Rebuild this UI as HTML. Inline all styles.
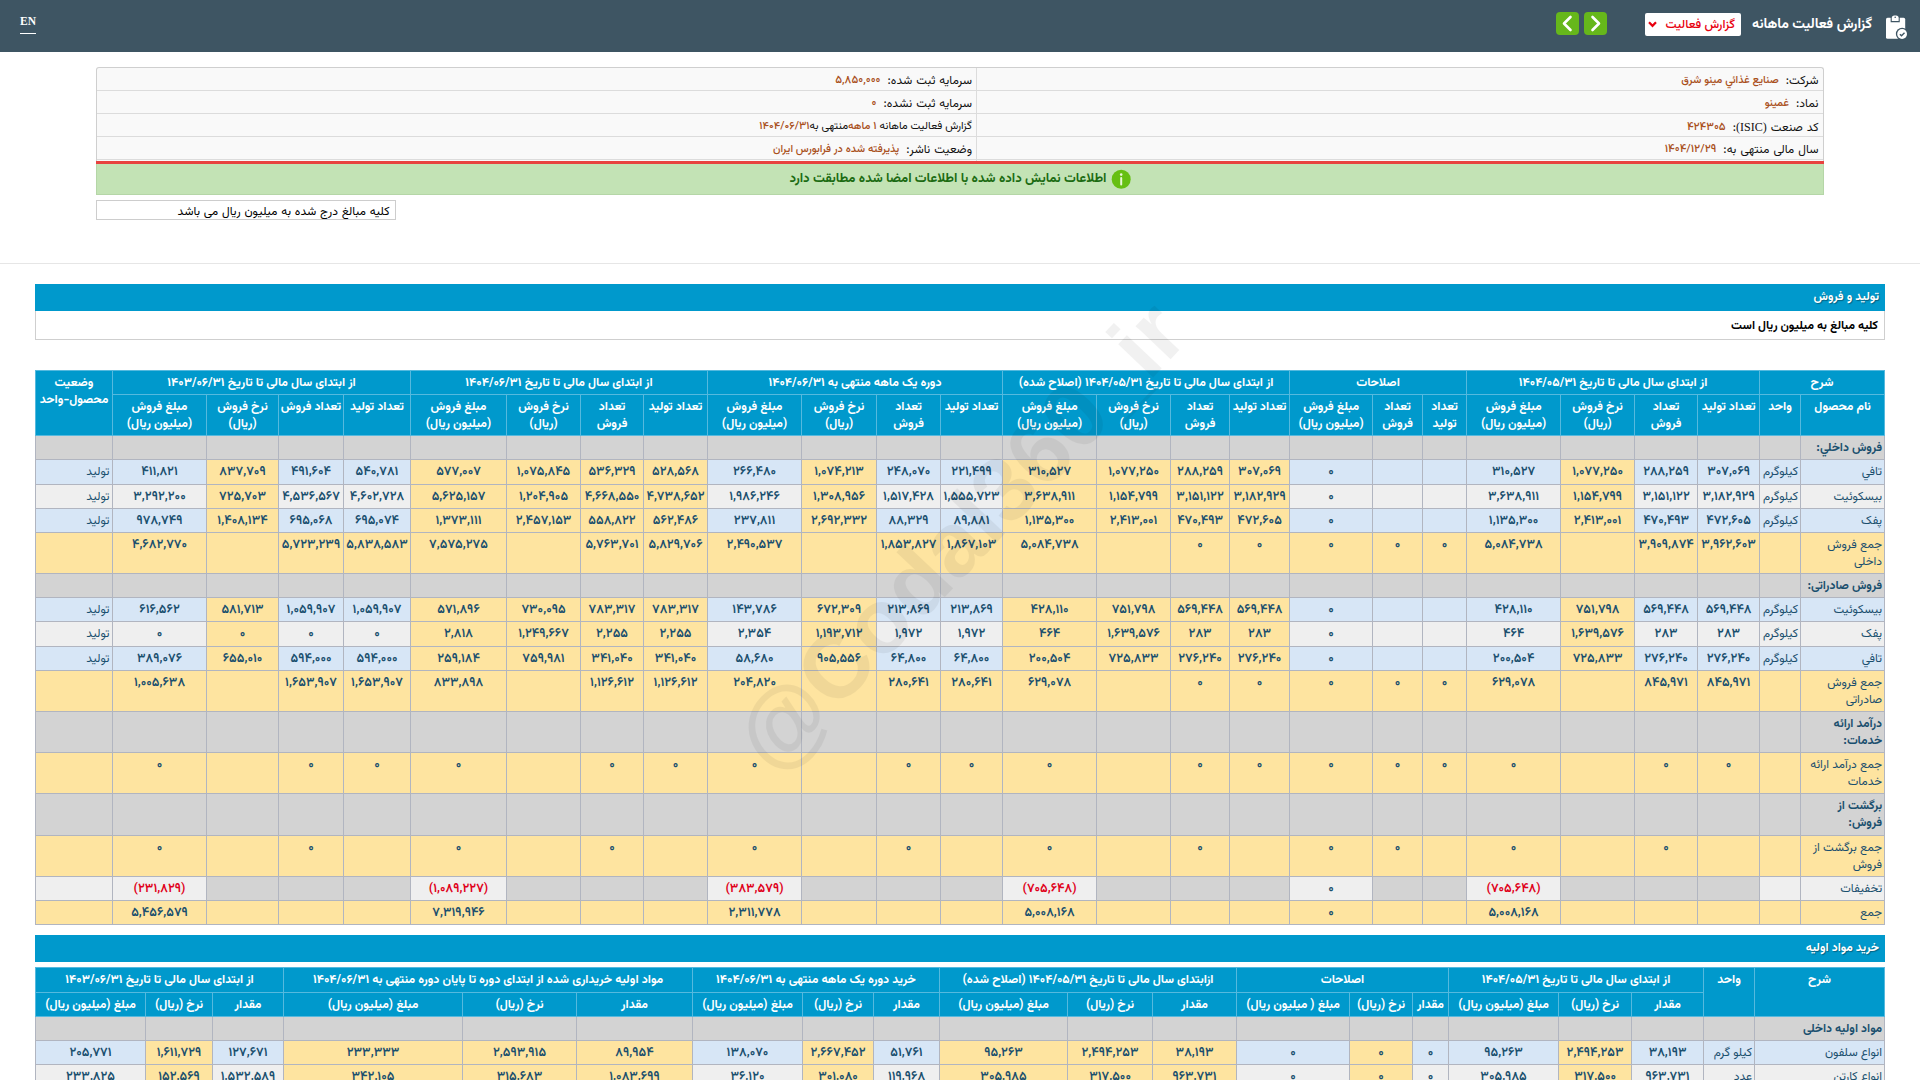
<!DOCTYPE html><html lang="fa" dir="rtl"><head><meta charset="utf-8"><title>گزارش فعالیت ماهانه</title><style>
*{box-sizing:border-box}
html,body{margin:0;padding:0}
body{width:1920px;height:1080px;overflow:hidden;background:#fff;direction:rtl;font-family:"Vazirmatn","DejaVu Sans","Liberation Sans",sans-serif;font-size:12px;color:#000;position:relative}
.lat{font-family:"Liberation Serif",serif}
#top{position:absolute;left:0;top:0;width:1920px;height:52px;background:#3e5563}
#en{position:absolute;left:20px;top:14px;color:#fff;font-family:"Liberation Serif",serif;font-weight:bold;font-size:11.5px;direction:ltr;line-height:14px;border-bottom:1px solid #fff;padding-bottom:5px}
#title{position:absolute;right:48px;top:13.5px;color:#fff;font-weight:bold;font-size:14px;line-height:22px;white-space:nowrap}
#sel{position:absolute;left:1645px;top:13px;width:96px;height:23px;background:#fff;border-radius:2px;color:#e8000f;font-weight:500;font-size:12.3px;line-height:24px;padding-right:6px;white-space:nowrap;word-spacing:0px}
.nb{position:absolute;top:12px;width:23px;height:23px;background:#66b71b;border-radius:4px}
#info{position:absolute;left:96px;top:67px;width:1728px;height:94px;border:1px solid #cfcfcf;border-bottom:none;background:#f9f9f9;border-radius:3px 3px 0 0}
.ir{position:absolute;left:0;width:100%;height:23px;border-bottom:1px solid #dcdcdc}
.ic{position:absolute;top:2px;height:23px;line-height:23px;white-space:nowrap;font-size:12px;color:#111;word-spacing:.8px}
.ic b{font-weight:500;color:#a9501c;font-size:10.8px;word-spacing:0;position:relative;top:-1px;margin-right:-1px}
.ic .m{font-size:11px;font-weight:500;color:#a9501c}
.ic .n{font-size:11.4px;font-weight:500;color:#a9501c;position:relative;top:-1px;margin-right:-1px}
#redl{position:absolute;left:96px;top:161px;width:1728px;height:3px;background:#e8423f}
#green{position:absolute;left:96px;top:164px;width:1728px;height:31px;background:#c3e3b5;border:1px solid #b5d6a7;border-top:none}
#green span{position:absolute;white-space:nowrap;font-size:13.15px;color:#1b6b12;font-weight:bold}
#note{position:absolute;left:96px;top:200px;width:300px;height:20px;border:1px solid #cdcdcd;background:#fff;font-size:12px;line-height:22px;padding-right:5.5px;white-space:nowrap;word-spacing:.55px}
#hr{position:absolute;left:0;top:263px;width:1920px;height:1px;background:#e6e6e6}
.sh{position:absolute;left:35px;width:1850px;height:27px;background:#0099cc;color:#fff;font-weight:bold;font-size:12px;line-height:27px;padding-right:6px;text-shadow:1px 1px 1px rgba(0,0,0,.35)}
#sub{position:absolute;left:35px;top:311px;width:1850px;height:29px;border:1px solid #cfcfcf;border-top:none;background:#fff;font-weight:bold;font-size:12px;line-height:30px;padding-right:6px}
table{position:absolute;border-collapse:collapse;table-layout:fixed;direction:rtl}
td,th{border:1px solid #b1b5c0;padding:0;overflow:hidden;vertical-align:top;text-align:center;white-space:nowrap}
th{background:#0099cc;color:#fff;font-weight:bold;font-size:12.2px;line-height:17px;border-color:#55b9de;white-space:nowrap}
tr.h2 th{padding-top:4px}
td{font-weight:600;font-size:12.7px;color:#1a4f6e;line-height:17px;padding-top:4px}
td.t{font-weight:normal;font-size:12px;text-align:right;padding-right:2px;white-space:nowrap;padding-top:4px}
td.c{font-weight:bold;font-size:12px;text-align:right;padding-right:2px;white-space:nowrap;padding-top:4px}
.y{background:#fee4a0}.b{background:#d7e6f6}.g{background:#d3d3d3}.l{background:#efefef}
.r{color:#e0001a}
#wm{position:absolute;left:960px;top:536px;width:0;height:0;white-space:nowrap;direction:ltr;font-family:"Liberation Sans",sans-serif;font-weight:bold;font-size:91px;line-height:0;color:#000;opacity:.05;transform:rotate(-46.5deg);display:flex;justify-content:center;align-items:center;pointer-events:none}
tr.k th{padding-top:4px}
</style></head><body>
<div id="top"><div id="en">EN</div><svg style="position:absolute;left:1884px;top:12px" width="28" height="30" viewBox="0 0 28 30"><rect x="2" y="5.8" width="19.2" height="21" rx="1.6" fill="#fff"/><path d="M7.2 9.6V6.2a3.2 3.2 0 0 1 3.2-3.2h1.6a3.2 3.2 0 0 1 3.2 3.2v3.4z" fill="#fff" stroke="#3e5563" stroke-width="1.1"/><rect x="6.6" y="2" width="9.2" height="3.9" fill="#3e5563"/><path d="M7.75 6.2a2.65 2.65 0 0 1 2.65-2.65h1.6a2.65 2.65 0 0 1 2.65 2.65z" fill="#fff"/><circle cx="11.2" cy="5.3" r=".8" fill="#3e5563"/><circle cx="18.1" cy="22" r="6.2" fill="#3e5563"/><circle cx="18.1" cy="22" r="4.9" fill="#fff"/><path d="M15.9 22.3l1.6 1.5 3-3" stroke="#3e5563" stroke-width="1.4" fill="none"/></svg><div id="title">گزارش فعالیت ماهانه</div><div id="sel">گزارش فعالیت<svg style="position:absolute;left:3px;top:8px" width="9" height="7" viewBox="0 0 9 7"><path d="M1 1.2l3.5 3.6L8 1.2" stroke="#e8000f" stroke-width="2.2" fill="none"/></svg></div><div class="nb" style="left:1584px"><svg width="23" height="23" viewBox="0 0 23 23"><path d="M8.5 5l6.5 6.5-6.5 6.5" stroke="#fff" stroke-width="2.6" fill="none" stroke-linecap="round" stroke-linejoin="round"/></svg></div><div class="nb" style="left:1556px"><svg width="23" height="23" viewBox="0 0 23 23"><path d="M14.5 5L8 11.5l6.5 6.5" stroke="#fff" stroke-width="2.6" fill="none" stroke-linecap="round" stroke-linejoin="round"/></svg></div></div>
<div id="info">
<div class="ir" style="top:0px">
<div class="ic" style="right:4.5px">شرکت:&nbsp; <b>صنایع غذائي مینو شرق</b></div>
<div class="ic" style="right:851px">سرمایه ثبت شده:&nbsp; <span class="n">۵,۸۵۰,۰۰۰</span></div>
</div>
<div class="ir" style="top:23px">
<div class="ic" style="right:4.5px">نماد:&nbsp; <b>غمینو</b></div>
<div class="ic" style="right:851px">سرمایه ثبت نشده:&nbsp; <span class="n">۰</span></div>
</div>
<div class="ir" style="top:46px">
<div class="ic" style="right:4.5px">کد صنعت <span class="lat">(ISIC)</span>:&nbsp; <span class="n">۴۲۴۳۰۵</span></div>
<div class="ic" style="right:851px;font-size:11px;word-spacing:0;margin-top:-1px">گزارش فعالیت ماهانه <span class="m">۱ ماهه</span>&zwnj;منتهی به<span class="m">۱۴۰۴/۰۶/۳۱</span></div>
</div>
<div class="ir" style="top:69px">
<div class="ic" style="right:4.5px">سال مالی منتهی به:&nbsp; <span class="n">۱۴۰۴/۱۲/۲۹</span></div>
<div class="ic" style="right:851px">وضعیت ناشر:&nbsp; <b>پذیرفته شده در فرابورس ایران</b></div>
</div>
<div style="position:absolute;left:879px;top:0;width:1px;height:93px;background:#dcdcdc"></div>
</div><div id="redl"></div>
<div id="green"><svg style="position:absolute;left:1014px;top:5px" width="21" height="21" viewBox="0 0 21 21"><circle cx="10.2" cy="10.3" r="9.5" fill="#66bf12"/><circle cx="10.2" cy="5.6" r="1.3" fill="#e9f8d8"/><rect x="9.2" y="8" width="2" height="8.4" rx="1" fill="#e9f8d8"/></svg><span style="right:716.5px;top:8px;line-height:15px">اطلاعات نمایش داده شده با اطلاعات امضا شده مطابقت دارد</span></div>
<div id="note">کلیه مبالغ درج شده به میلیون ریال می باشد</div><div id="hr"></div>
<div class="sh" style="top:284px">تولید و فروش</div><div id="sub">کلیه مبالغ به میلیون ریال است</div>
<table id="t1" style="left:35px;top:370px;width:1850px"><colgroup><col style="width:84px"><col style="width:41px"><col style="width:62px"><col style="width:63px"><col style="width:74px"><col style="width:94px"><col style="width:44px"><col style="width:50px"><col style="width:83px"><col style="width:60px"><col style="width:59px"><col style="width:74px"><col style="width:94px"><col style="width:62px"><col style="width:64px"><col style="width:75px"><col style="width:94px"><col style="width:64px"><col style="width:63px"><col style="width:74px"><col style="width:96px"><col style="width:67px"><col style="width:65px"><col style="width:72px"><col style="width:94px"><col style="width:77px"></colgroup><tr style="height:23.5px"><th colspan="2" style="padding-top:4px">شرح</th><th colspan="4" style="padding-top:4px">از ابتدای سال مالی تا تاریخ ۱۴۰۴/۰۵/۳۱</th><th colspan="3" style="padding-top:4px">اصلاحات</th><th colspan="4" style="padding-top:4px">از ابتدای سال مالی تا تاریخ ۱۴۰۴/۰۵/۳۱ (اصلاح شده)</th><th colspan="4" style="padding-top:4px">دوره یک ماهه منتهی به ۱۴۰۴/۰۶/۳۱</th><th colspan="4" style="padding-top:4px">از ابتدای سال مالی تا تاریخ ۱۴۰۴/۰۶/۳۱</th><th colspan="4" style="padding-top:4px">از ابتدای سال مالی تا تاریخ ۱۴۰۳/۰۶/۳۱</th><th rowspan="2" style="padding-top:4px">وضعیت<br>محصول-واحد</th></tr><tr style="height:41px" class="h2"><th>نام محصول</th><th>واحد</th><th>تعداد تولید</th><th>تعداد<br>فروش</th><th>نرخ فروش<br>(ریال)</th><th>مبلغ فروش<br>(میلیون ریال)</th><th>تعداد<br>تولید</th><th>تعداد<br>فروش</th><th>مبلغ فروش<br>(میلیون ریال)</th><th>تعداد تولید</th><th>تعداد<br>فروش</th><th>نرخ فروش<br>(ریال)</th><th>مبلغ فروش<br>(میلیون ریال)</th><th>تعداد تولید</th><th>تعداد<br>فروش</th><th>نرخ فروش<br>(ریال)</th><th>مبلغ فروش<br>(میلیون ریال)</th><th>تعداد تولید</th><th>تعداد<br>فروش</th><th>نرخ فروش<br>(ریال)</th><th>مبلغ فروش<br>(میلیون ریال)</th><th>تعداد تولید</th><th>تعداد فروش</th><th>نرخ فروش<br>(ریال)</th><th>مبلغ فروش<br>(میلیون ریال)</th></tr><tr style="height:24px"><td class="c g">فروش داخلي:</td><td class="g"></td><td class="g"></td><td class="g"></td><td class="g"></td><td class="g"></td><td class="g"></td><td class="g"></td><td class="g"></td><td class="g"></td><td class="g"></td><td class="g"></td><td class="g"></td><td class="g"></td><td class="g"></td><td class="g"></td><td class="g"></td><td class="g"></td><td class="g"></td><td class="g"></td><td class="g"></td><td class="g"></td><td class="g"></td><td class="g"></td><td class="g"></td><td class="g"></td></tr><tr style="height:25.5px"><td class="t b">تافي</td><td class="t b" style="padding-right:2px">کیلوگرم</td><td class="b">۳۰۷,۰۶۹</td><td class="b">۲۸۸,۲۵۹</td><td class="y">۱,۰۷۷,۲۵۰</td><td class="b">۳۱۰,۵۲۷</td><td class="b"></td><td class="b"></td><td class="b">۰</td><td class="y">۳۰۷,۰۶۹</td><td class="y">۲۸۸,۲۵۹</td><td class="y">۱,۰۷۷,۲۵۰</td><td class="y">۳۱۰,۵۲۷</td><td class="b">۲۲۱,۴۹۹</td><td class="b">۲۴۸,۰۷۰</td><td class="y">۱,۰۷۴,۲۱۳</td><td class="b">۲۶۶,۴۸۰</td><td class="y">۵۲۸,۵۶۸</td><td class="y">۵۳۶,۳۲۹</td><td class="y">۱,۰۷۵,۸۴۵</td><td class="y">۵۷۷,۰۰۷</td><td class="b">۵۴۰,۷۸۱</td><td class="b">۴۹۱,۶۰۴</td><td class="y">۸۳۷,۷۰۹</td><td class="b">۴۱۱,۸۲۱</td><td class="t b" style="padding-right:2.5px">تولید</td></tr><tr style="height:24px"><td class="t l">بیسکوئیت</td><td class="t l" style="padding-right:2px">کیلوگرم</td><td class="l">۳,۱۸۲,۹۲۹</td><td class="l">۳,۱۵۱,۱۲۲</td><td class="y">۱,۱۵۴,۷۹۹</td><td class="l">۳,۶۳۸,۹۱۱</td><td class="l"></td><td class="l"></td><td class="l">۰</td><td class="y">۳,۱۸۲,۹۲۹</td><td class="y">۳,۱۵۱,۱۲۲</td><td class="y">۱,۱۵۴,۷۹۹</td><td class="y">۳,۶۳۸,۹۱۱</td><td class="l">۱,۵۵۵,۷۲۳</td><td class="l">۱,۵۱۷,۴۲۸</td><td class="y">۱,۳۰۸,۹۵۶</td><td class="l">۱,۹۸۶,۲۴۶</td><td class="y">۴,۷۳۸,۶۵۲</td><td class="y">۴,۶۶۸,۵۵۰</td><td class="y">۱,۲۰۴,۹۰۵</td><td class="y">۵,۶۲۵,۱۵۷</td><td class="l">۴,۶۰۲,۷۲۸</td><td class="l">۴,۵۳۶,۵۶۷</td><td class="y">۷۲۵,۷۰۳</td><td class="l">۳,۲۹۲,۲۰۰</td><td class="t l" style="padding-right:2.5px">تولید</td></tr><tr style="height:24px"><td class="t b">پفک</td><td class="t b" style="padding-right:2px">کیلوگرم</td><td class="b">۴۷۲,۶۰۵</td><td class="b">۴۷۰,۴۹۳</td><td class="y">۲,۴۱۳,۰۰۱</td><td class="b">۱,۱۳۵,۳۰۰</td><td class="b"></td><td class="b"></td><td class="b">۰</td><td class="y">۴۷۲,۶۰۵</td><td class="y">۴۷۰,۴۹۳</td><td class="y">۲,۴۱۳,۰۰۱</td><td class="y">۱,۱۳۵,۳۰۰</td><td class="b">۸۹,۸۸۱</td><td class="b">۸۸,۳۲۹</td><td class="y">۲,۶۹۲,۳۳۲</td><td class="b">۲۳۷,۸۱۱</td><td class="y">۵۶۲,۴۸۶</td><td class="y">۵۵۸,۸۲۲</td><td class="y">۲,۴۵۷,۱۵۳</td><td class="y">۱,۳۷۳,۱۱۱</td><td class="b">۶۹۵,۰۷۴</td><td class="b">۶۹۵,۰۶۸</td><td class="y">۱,۴۰۸,۱۳۴</td><td class="b">۹۷۸,۷۴۹</td><td class="t b" style="padding-right:2.5px">تولید</td></tr><tr style="height:40.5px"><td class="t y">جمع فروش<br>داخلی</td><td class="y"></td><td class="y">۳,۹۶۲,۶۰۳</td><td class="y">۳,۹۰۹,۸۷۴</td><td class="y"></td><td class="y">۵,۰۸۴,۷۳۸</td><td class="y">۰</td><td class="y">۰</td><td class="y">۰</td><td class="y">۰</td><td class="y">۰</td><td class="y"></td><td class="y">۵,۰۸۴,۷۳۸</td><td class="y">۱,۸۶۷,۱۰۳</td><td class="y">۱,۸۵۳,۸۲۷</td><td class="y"></td><td class="y">۲,۴۹۰,۵۳۷</td><td class="y">۵,۸۲۹,۷۰۶</td><td class="y">۵,۷۶۳,۷۰۱</td><td class="y"></td><td class="y">۷,۵۷۵,۲۷۵</td><td class="y">۵,۸۳۸,۵۸۳</td><td class="y">۵,۷۲۳,۲۳۹</td><td class="y"></td><td class="y">۴,۶۸۲,۷۷۰</td><td class="y"></td></tr><tr style="height:24.5px"><td class="c g">فروش صادراتی:</td><td class="g"></td><td class="g"></td><td class="g"></td><td class="g"></td><td class="g"></td><td class="g"></td><td class="g"></td><td class="g"></td><td class="g"></td><td class="g"></td><td class="g"></td><td class="g"></td><td class="g"></td><td class="g"></td><td class="g"></td><td class="g"></td><td class="g"></td><td class="g"></td><td class="g"></td><td class="g"></td><td class="g"></td><td class="g"></td><td class="g"></td><td class="g"></td><td class="g"></td></tr><tr style="height:23.5px"><td class="t b">بیسکوئیت</td><td class="t b" style="padding-right:2px">کیلوگرم</td><td class="b">۵۶۹,۴۴۸</td><td class="b">۵۶۹,۴۴۸</td><td class="y">۷۵۱,۷۹۸</td><td class="b">۴۲۸,۱۱۰</td><td class="b"></td><td class="b"></td><td class="b">۰</td><td class="y">۵۶۹,۴۴۸</td><td class="y">۵۶۹,۴۴۸</td><td class="y">۷۵۱,۷۹۸</td><td class="y">۴۲۸,۱۱۰</td><td class="b">۲۱۳,۸۶۹</td><td class="b">۲۱۳,۸۶۹</td><td class="y">۶۷۲,۳۰۹</td><td class="b">۱۴۳,۷۸۶</td><td class="y">۷۸۳,۳۱۷</td><td class="y">۷۸۳,۳۱۷</td><td class="y">۷۳۰,۰۹۵</td><td class="y">۵۷۱,۸۹۶</td><td class="b">۱,۰۵۹,۹۰۷</td><td class="b">۱,۰۵۹,۹۰۷</td><td class="y">۵۸۱,۷۱۳</td><td class="b">۶۱۶,۵۶۲</td><td class="t b" style="padding-right:2.5px">تولید</td></tr><tr style="height:25.5px"><td class="t l">پفک</td><td class="t l" style="padding-right:2px">کیلوگرم</td><td class="l">۲۸۳</td><td class="l">۲۸۳</td><td class="y">۱,۶۳۹,۵۷۶</td><td class="l">۴۶۴</td><td class="l"></td><td class="l"></td><td class="l">۰</td><td class="y">۲۸۳</td><td class="y">۲۸۳</td><td class="y">۱,۶۳۹,۵۷۶</td><td class="y">۴۶۴</td><td class="l">۱,۹۷۲</td><td class="l">۱,۹۷۲</td><td class="y">۱,۱۹۳,۷۱۲</td><td class="l">۲,۳۵۴</td><td class="y">۲,۲۵۵</td><td class="y">۲,۲۵۵</td><td class="y">۱,۲۴۹,۶۶۷</td><td class="y">۲,۸۱۸</td><td class="l">۰</td><td class="l">۰</td><td class="y">۰</td><td class="l">۰</td><td class="t l" style="padding-right:2.5px">تولید</td></tr><tr style="height:24px"><td class="t b">تافي</td><td class="t b" style="padding-right:2px">کیلوگرم</td><td class="b">۲۷۶,۲۴۰</td><td class="b">۲۷۶,۲۴۰</td><td class="y">۷۲۵,۸۳۳</td><td class="b">۲۰۰,۵۰۴</td><td class="b"></td><td class="b"></td><td class="b">۰</td><td class="y">۲۷۶,۲۴۰</td><td class="y">۲۷۶,۲۴۰</td><td class="y">۷۲۵,۸۳۳</td><td class="y">۲۰۰,۵۰۴</td><td class="b">۶۴,۸۰۰</td><td class="b">۶۴,۸۰۰</td><td class="y">۹۰۵,۵۵۶</td><td class="b">۵۸,۶۸۰</td><td class="y">۳۴۱,۰۴۰</td><td class="y">۳۴۱,۰۴۰</td><td class="y">۷۵۹,۹۸۱</td><td class="y">۲۵۹,۱۸۴</td><td class="b">۵۹۴,۰۰۰</td><td class="b">۵۹۴,۰۰۰</td><td class="y">۶۵۵,۰۱۰</td><td class="b">۳۸۹,۰۷۶</td><td class="t b" style="padding-right:2.5px">تولید</td></tr><tr style="height:40.5px"><td class="t y">جمع فروش<br>صادراتی</td><td class="y"></td><td class="y">۸۴۵,۹۷۱</td><td class="y">۸۴۵,۹۷۱</td><td class="y"></td><td class="y">۶۲۹,۰۷۸</td><td class="y">۰</td><td class="y">۰</td><td class="y">۰</td><td class="y">۰</td><td class="y">۰</td><td class="y"></td><td class="y">۶۲۹,۰۷۸</td><td class="y">۲۸۰,۶۴۱</td><td class="y">۲۸۰,۶۴۱</td><td class="y"></td><td class="y">۲۰۴,۸۲۰</td><td class="y">۱,۱۲۶,۶۱۲</td><td class="y">۱,۱۲۶,۶۱۲</td><td class="y"></td><td class="y">۸۳۳,۸۹۸</td><td class="y">۱,۶۵۳,۹۰۷</td><td class="y">۱,۶۵۳,۹۰۷</td><td class="y"></td><td class="y">۱,۰۰۵,۶۳۸</td><td class="y"></td></tr><tr style="height:41.5px"><td class="c g">درآمد ارائه<br>خدمات:</td><td class="g"></td><td class="g"></td><td class="g"></td><td class="g"></td><td class="g"></td><td class="g"></td><td class="g"></td><td class="g"></td><td class="g"></td><td class="g"></td><td class="g"></td><td class="g"></td><td class="g"></td><td class="g"></td><td class="g"></td><td class="g"></td><td class="g"></td><td class="g"></td><td class="g"></td><td class="g"></td><td class="g"></td><td class="g"></td><td class="g"></td><td class="g"></td><td class="g"></td></tr><tr style="height:40.5px"><td class="t y">جمع درآمد ارائه<br>خدمات</td><td class="y"></td><td class="y">۰</td><td class="y">۰</td><td class="y"></td><td class="y">۰</td><td class="y">۰</td><td class="y">۰</td><td class="y">۰</td><td class="y">۰</td><td class="y">۰</td><td class="y"></td><td class="y">۰</td><td class="y">۰</td><td class="y">۰</td><td class="y"></td><td class="y">۰</td><td class="y">۰</td><td class="y">۰</td><td class="y"></td><td class="y">۰</td><td class="y">۰</td><td class="y">۰</td><td class="y"></td><td class="y">۰</td><td class="y"></td></tr><tr style="height:42.5px"><td class="c g">برگشت از<br>فروش:</td><td class="g"></td><td class="g"></td><td class="g"></td><td class="g"></td><td class="g"></td><td class="g"></td><td class="g"></td><td class="g"></td><td class="g"></td><td class="g"></td><td class="g"></td><td class="g"></td><td class="g"></td><td class="g"></td><td class="g"></td><td class="g"></td><td class="g"></td><td class="g"></td><td class="g"></td><td class="g"></td><td class="g"></td><td class="g"></td><td class="g"></td><td class="g"></td><td class="g"></td></tr><tr style="height:40.5px"><td class="t y">جمع برگشت از<br>فروش</td><td class="y"></td><td class="y"></td><td class="y">۰</td><td class="y"></td><td class="y">۰</td><td class="y"></td><td class="y">۰</td><td class="y">۰</td><td class="y"></td><td class="y">۰</td><td class="y"></td><td class="y">۰</td><td class="y"></td><td class="y">۰</td><td class="y"></td><td class="y">۰</td><td class="y"></td><td class="y">۰</td><td class="y"></td><td class="y">۰</td><td class="y"></td><td class="y">۰</td><td class="y"></td><td class="y">۰</td><td class="y"></td></tr><tr style="height:24.5px"><td class="t l">تخفیفات</td><td class="l"></td><td class="g"></td><td class="g"></td><td class="g"></td><td class="l r">(۷۰۵,۶۴۸)</td><td class="g"></td><td class="g"></td><td class="l">۰</td><td class="g"></td><td class="g"></td><td class="g"></td><td class="l r">(۷۰۵,۶۴۸)</td><td class="g"></td><td class="g"></td><td class="g"></td><td class="l r">(۳۸۳,۵۷۹)</td><td class="g"></td><td class="g"></td><td class="g"></td><td class="l r">(۱,۰۸۹,۲۲۷)</td><td class="g"></td><td class="g"></td><td class="g"></td><td class="l r">(۲۳۱,۸۲۹)</td><td class="l"></td></tr><tr style="height:24px"><td class="t y">جمع</td><td class="y"></td><td class="y"></td><td class="y"></td><td class="y"></td><td class="y">۵,۰۰۸,۱۶۸</td><td class="y"></td><td class="y"></td><td class="y">۰</td><td class="y"></td><td class="y"></td><td class="y"></td><td class="y">۵,۰۰۸,۱۶۸</td><td class="y"></td><td class="y"></td><td class="y"></td><td class="y">۲,۳۱۱,۷۷۸</td><td class="y"></td><td class="y"></td><td class="y"></td><td class="y">۷,۳۱۹,۹۴۶</td><td class="y"></td><td class="y"></td><td class="y"></td><td class="y">۵,۴۵۶,۵۷۹</td><td class="y"></td></tr></table>
<div class="sh" style="top:935px">خرید مواد اولیه</div>
<table id="t2" style="left:35px;top:967px;width:1850px"><colgroup><col style="width:130px"><col style="width:51px"><col style="width:72px"><col style="width:73px"><col style="width:110px"><col style="width:36px"><col style="width:63px"><col style="width:113px"><col style="width:84px"><col style="width:85px"><col style="width:128px"><col style="width:66px"><col style="width:71px"><col style="width:110px"><col style="width:116px"><col style="width:114px"><col style="width:179px"><col style="width:71px"><col style="width:67px"><col style="width:110px"></colgroup><tr style="height:24.5px" class="k"><th rowspan="2">شرح</th><th rowspan="2">واحد</th><th colspan="3">از ابتدای سال مالی تا تاریخ ۱۴۰۴/۰۵/۳۱</th><th colspan="3">اصلاحات</th><th colspan="3">ازابتدای سال مالی تا تاریخ ۱۴۰۴/۰۵/۳۱ (اصلاح شده)</th><th colspan="3">خرید دوره یک ماهه منتهی به ۱۴۰۴/۰۶/۳۱</th><th colspan="3">مواد اولیه خریداری شده از ابتدای دوره تا پایان دوره منتهی به ۱۴۰۴/۰۶/۳۱</th><th colspan="3">از ابتدای سال مالی تا تاریخ ۱۴۰۳/۰۶/۳۱</th></tr><tr style="height:24px" class="k"><th>مقدار</th><th>نرخ (ریال)</th><th>مبلغ (میلیون ریال)</th><th>مقدار</th><th>نرخ (ریال)</th><th>مبلغ ( میلیون ریال)</th><th>مقدار</th><th>نرخ (ریال)</th><th>مبلغ (میلیون ریال)</th><th>مقدار</th><th>نرخ (ریال)</th><th>مبلغ (میلیون ریال)</th><th>مقدار</th><th>نرخ (ریال)</th><th>مبلغ (میلیون ریال)</th><th>مقدار</th><th>نرخ (ریال)</th><th>مبلغ (میلیون ریال)</th></tr><tr style="height:24px"><td class="c g">مواد اولیه داخلی</td><td class="g"></td><td class="g"></td><td class="g"></td><td class="g"></td><td class="g"></td><td class="g"></td><td class="g"></td><td class="g"></td><td class="g"></td><td class="g"></td><td class="g"></td><td class="g"></td><td class="g"></td><td class="g"></td><td class="g"></td><td class="g"></td><td class="g"></td><td class="g"></td><td class="g"></td></tr><tr style="height:24px"><td class="t b">انواع سلفون</td><td class="t b">کیلو گرم</td><td class="b">۳۸,۱۹۳</td><td class="y">۲,۴۹۴,۲۵۳</td><td class="b">۹۵,۲۶۳</td><td class="b">۰</td><td class="y">۰</td><td class="b">۰</td><td class="y">۳۸,۱۹۳</td><td class="y">۲,۴۹۴,۲۵۳</td><td class="y">۹۵,۲۶۳</td><td class="b">۵۱,۷۶۱</td><td class="y">۲,۶۶۷,۴۵۲</td><td class="b">۱۳۸,۰۷۰</td><td class="y">۸۹,۹۵۴</td><td class="y">۲,۵۹۳,۹۱۵</td><td class="y">۲۳۳,۳۳۳</td><td class="b">۱۲۷,۶۷۱</td><td class="y">۱,۶۱۱,۷۲۹</td><td class="b">۲۰۵,۷۷۱</td></tr><tr style="height:24.5px"><td class="t l">انواع کارتن</td><td class="t l">عدد</td><td class="l">۹۶۳,۷۳۱</td><td class="y">۳۱۷,۵۰۰</td><td class="l">۳۰۵,۹۸۵</td><td class="l">۰</td><td class="y">۰</td><td class="l">۰</td><td class="y">۹۶۳,۷۳۱</td><td class="y">۳۱۷,۵۰۰</td><td class="y">۳۰۵,۹۸۵</td><td class="l">۱۱۹,۹۶۸</td><td class="y">۳۰۱,۰۸۰</td><td class="l">۳۶,۱۲۰</td><td class="y">۱,۰۸۳,۶۹۹</td><td class="y">۳۱۵,۶۸۳</td><td class="y">۳۴۲,۱۰۵</td><td class="l">۱,۵۳۲,۵۸۹</td><td class="y">۱۵۲,۵۶۹</td><td class="l">۲۳۳,۸۲۵</td></tr></table>
<div id="wm">@Codal360_ir</div>
</body></html>
